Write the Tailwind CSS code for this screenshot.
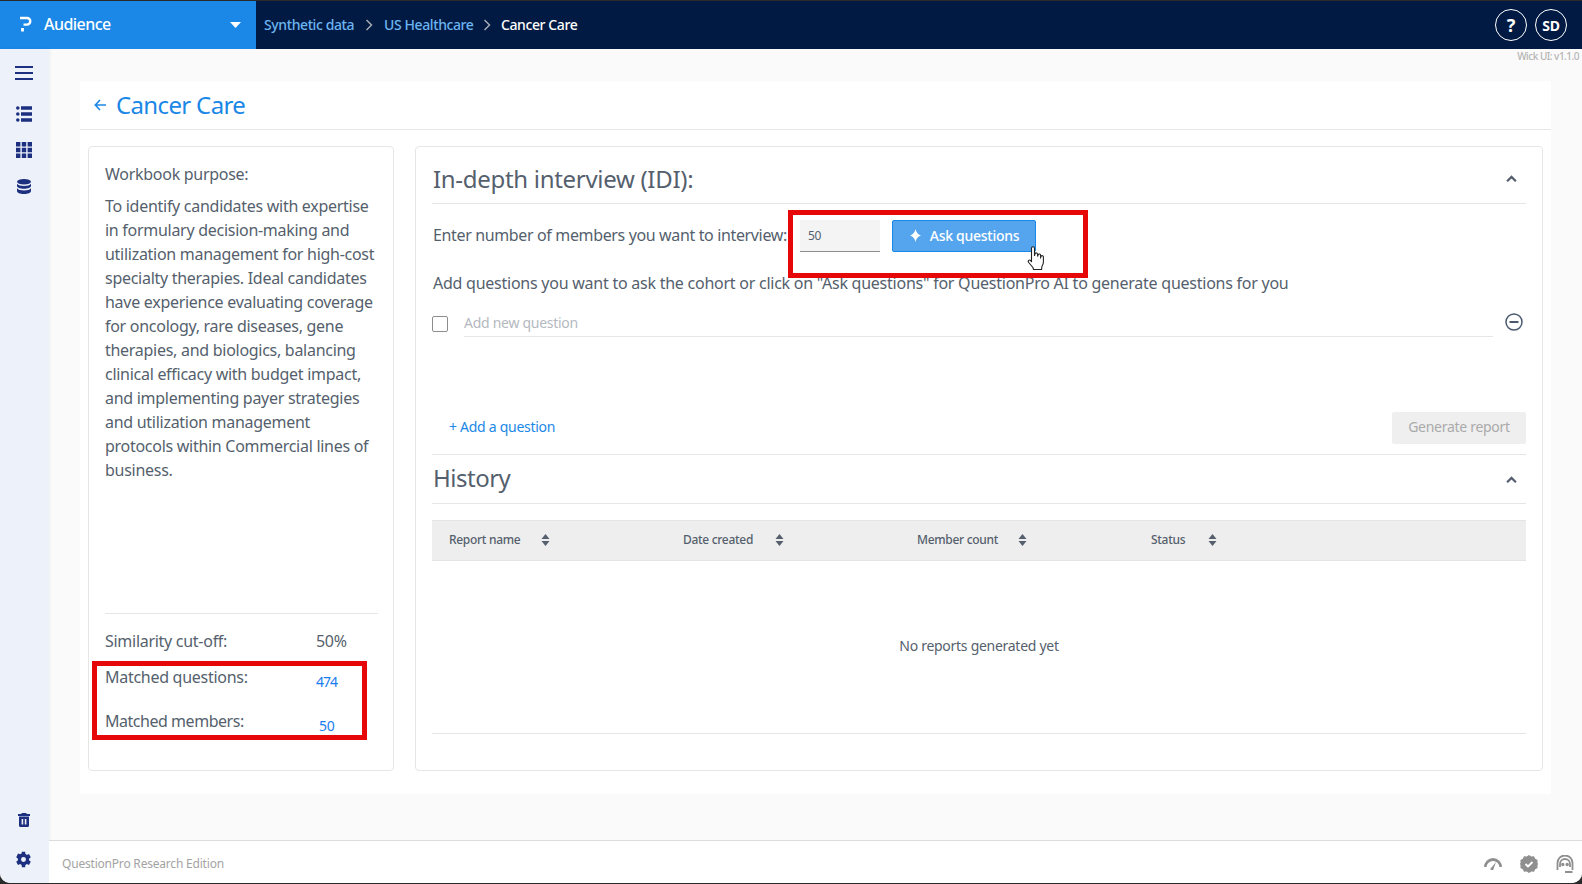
<!doctype html>
<html lang="en">
  <head>
    <meta charset="UTF-8" />
    <title>Cancer Care</title>
    <script src="https://cdn.jsdelivr.net/npm/@tailwindcss/browser@4"></script>
  </head>
  <body class="bg-[#2a2a2a] font-['Noto_Sans',sans-serif] text-[#555f6d] overflow-hidden">
    <div class="relative w-[1582px] h-[884px] pt-px pb-px">
      <div class="flex flex-col h-full bg-[#fafafa] rounded-b-[10px] overflow-hidden">

        <!-- top bar -->
        <header class="flex items-center h-12 shrink-0 bg-[#001a43] text-white">
          <div class="flex items-center w-[256px] h-full bg-[#1b87e6] pl-[20px] pr-[15px]">
            <svg class="w-[12px] h-[16px] mb-[2px]" viewBox="0 0 12 16" fill="none" stroke="#fff" stroke-width="2.4"><path d="M0 2h7a3.200 3.200 0 0 1 0 6.600H3.500"/><path d="M2.500 12v3.500" stroke-width="2.800"/></svg>
            <span class="ml-[12px] mb-[2px] text-[16px] font-medium tracking-[-0.55px]">Audience</span>
            <svg class="ml-auto w-[11px] h-[6px]" viewBox="0 0 11 6" fill="#fff"><path d="M0 0h11L5.500 6z"/></svg>
          </div>
          <nav class="flex items-center pl-2 pb-[2px] text-[14px] font-medium tracking-[-0.4px]">
            <a class="text-[#6db4f2] w-[92px]">Synthetic data</a>
            <svg class="w-[8px] h-[12px] ml-[9px] mr-[11px] mt-[2px]" viewBox="0 0 8 12" fill="none" stroke="#a5abb3" stroke-width="1.500"><path d="M1.500 1l5 5-5 5"/></svg>
            <a class="text-[#6db4f2] w-[90px]">US Healthcare</a>
            <svg class="w-[8px] h-[12px] ml-[9px] mr-[10px] mt-[2px]" viewBox="0 0 8 12" fill="none" stroke="#a5abb3" stroke-width="1.500"><path d="M1.500 1l5 5-5 5"/></svg>
            <span>Cancer Care</span>
          </nav>
          <div class="ml-auto flex items-center gap-2 pr-[15px]">
            <span class="flex items-center justify-center w-8 h-8 rounded-full border border-white text-[18px] font-bold">?</span>
            <span class="flex items-center justify-center w-8 h-8 rounded-full border border-white text-[14px] font-bold tracking-[-0.3px]">SD</span>
          </div>
        </header>

        <div class="flex flex-1 min-h-0">
          <!-- sidebar -->
          <aside class="flex flex-col items-center w-[49px] pr-[2px] shrink-0 bg-[#edf1fa] shadow-[1px_0_3px_rgba(0,0,0,0.05)] text-[#1d3080]">
            <svg class="w-[18px] h-[14px] mt-[17px]" viewBox="0 0 18 14" fill="currentColor"><path d="M0 0h18v2H0zM0 6h18v2H0zM0 12h18v2H0z"/></svg>
            <svg class="w-[16px] h-[16px] mt-[26px]" viewBox="0 0 16 16" fill="currentColor"><circle cx="1.800" cy="2" r="1.800"/><circle cx="1.800" cy="8" r="1.800"/><circle cx="1.800" cy="14" r="1.800"/><path d="M5 .2h11v3.600H5zM5 6.200h11v3.600H5zM5 12.200h11v3.600H5z"/></svg>
            <svg class="w-[16px] h-[16px] mt-[20px]" viewBox="0 0 16 16" fill="currentColor"><path d="M0 0h4.400v4.400H0zM5.800 0h4.400v4.400H5.800zM11.600 0H16v4.400h-4.400zM0 5.800h4.400v4.400H0zM5.800 5.800h4.400v4.400H5.800zM11.600 5.800H16v4.400h-4.400zM0 11.600h4.400V16H0zM5.800 11.600h4.400V16H5.800zM11.600 11.600H16V16h-4.400z"/></svg>
            <svg class="w-[14px] h-[15px] mt-[21px]" viewBox="0 0 14 15" fill="currentColor"><ellipse cx="7" cy="2.800" rx="7" ry="2.800"/><path d="M0 4.800c1 1.600 4 2.200 7 2.200s6-.6 7-2.200V7c0 1.500-3 2.800-7 2.800S0 8.500 0 7zM0 9.200c1 1.600 4 2.200 7 2.200s6-.6 7-2.200v2.800C14 13.700 11 15 7 15s-7-1.300-7-3z"/></svg>
            <svg class="w-[12px] h-[14px] mt-auto" viewBox="0 0 12 14" fill="currentColor"><path d="M4 0h4l1 1h3v2H0V1h3zM1 3.500h10v9A1.500 1.500 0 0 1 9.500 14h-7A1.500 1.500 0 0 1 1 12.500zM3.600 6v5.500h1.600V6zM6.800 6v5.500h1.600V6z"/></svg>
            <svg class="w-[17px] h-[17px] mt-[24px] mb-[15px]" viewBox="0 0 24 24" fill="currentColor"><path fill-rule="evenodd" d="M19.800 13.200a8 8 0 0 0 0-2.400l2.500-1.900-2.600-4.500-3 1.200a8 8 0 0 0-2-1.200L14.300 1.200H9.700l-.4 2.200a8 8 0 0 0-2 1.200l-3-1.200L1.700 8.900l2.500 1.900a8 8 0 0 0 0 2.400l-2.500 1.900 2.600 4.500 3-1.200a8 8 0 0 0 2 1.200l.4 3.200h4.600l.4-3.200a8 8 0 0 0 2-1.200l3 1.200 2.600-4.500zM12 15.500a3.500 3.500 0 1 1 0-7 3.500 3.500 0 0 1 0 7z"/></svg>
          </aside>

          <div class="relative flex flex-col flex-1 min-w-0">
            <span class="absolute right-[3px] top-0 text-[10px] font-medium tracking-[-0.5px] text-[#b4b4b4]">Wick UI: v1.1.0</span>

            <main class="flex-1 min-h-0 pt-8 pl-[31px] pr-[31px] pb-[46px]">
              <div class="flex flex-col h-full bg-white">
                <div class="flex items-center h-[49px] shrink-0 pl-[14px] border-b border-[#e6e6e6] text-[#1b87e6]">
                  <svg class="w-[12px] h-[12px]" viewBox="0 0 12 12" fill="none" stroke="currentColor" stroke-width="1.600"><path d="M6 1L1.300 6 6 11M1.500 6H12"/></svg>
                  <h1 class="ml-[10px] text-[24px] tracking-[-0.65px]">Cancer Care</h1>
                </div>

                <div class="flex flex-1 min-h-0 gap-[21px] px-2 pt-4 pb-[23px]">
                  <!-- workbook info -->
                  <section class="flex flex-col w-[306px] shrink-0 border border-[#e6e6e6] rounded-[4px] pt-[15px] pl-4 pr-[15px] pb-[37px] text-[16px] leading-6 tracking-[-0.28px]">
                    <p>Workbook purpose:</p>
                    <p class="mt-2">To identify candidates with expertise in formulary decision-making and utilization management for high-cost specialty therapies. Ideal candidates have experience evaluating coverage for oncology, rare diseases, gene therapies, and biologics, balancing clinical efficacy with budget impact, and implementing payer strategies and utilization management protocols within Commercial lines of business.</p>
                    <div class="mt-auto border-t border-[#e6e6e6] pt-[15px]">
                      <div class="flex h-9"><span class="w-[211px]">Similarity cut-off:</span><span>50%</span></div>
                      <div class="flex h-11"><span class="w-[211px]">Matched questions:</span><span class="mt-[5px] text-[14px] tracking-[-1px] text-[#1a7cf0]">474</span></div>
                      <div class="flex h-6"><span class="w-[214px] tracking-[-0.47px]">Matched members:</span><span class="mt-[5px] text-[14px] text-[#1a7cf0]">50</span></div>
                    </div>
                  </section>

                  <!-- interview -->
                  <section class="flex flex-col flex-1 min-w-0 border border-[#e6e6e6] rounded-[4px] pl-4 pr-4 text-[16px] tracking-[-0.28px]">
                    <div class="flex items-center justify-between h-[57px] pt-[7px] shrink-0 border-b border-[#e6e6e6] pl-px">
                      <h2 class="text-[24px] tracking-[-0.3px]">In-depth interview (IDI):</h2>
                      <svg class="w-[11px] h-[7px] mr-[9px]" viewBox="0 0 10 6" fill="none" stroke="#555f6d" stroke-width="2"><path d="M1 5.500l4-4 4 4"/></svg>
                    </div>

                    <div class="flex items-center h-8 mt-[16px] pl-px">
                      <span class="w-[367px] pb-[2px] whitespace-nowrap tracking-[-0.36px]">Enter number of members you want to interview:</span>
                      <div class="flex items-center w-20 h-8 px-2 bg-[#f4f4f4] border-b border-[#8d8d8d] text-[12px]">50</div>
                      <button class="flex items-center justify-center gap-[8px] w-[144px] h-8 ml-3 pb-[2px] rounded-[2px] bg-[#55a5ee] border border-[#1b87e6] text-white text-[14px] font-medium">
                        <svg class="w-[13px] h-[13px]" viewBox="0 0 12 12" fill="#fff"><path d="M6 0c.7 3.200 2 4.800 5 6-3 1.200-4.300 2.800-5 6-.7-3.200-2-4.800-5-6 3-1.200 4.300-2.800 5-6z"/></svg>
                        Ask questions
                      </button>
                    </div>

                    <p class="mt-[19px] leading-6 pl-px whitespace-nowrap tracking-[-0.245px]">Add questions you want to ask the cohort or click on "Ask questions" for QuestionPro AI to generate questions for you</p>

                    <div class="flex items-center mt-[12px] h-[30px]">
                      <span class="w-4 h-4 mt-[4px] rounded-[2px] border border-[#8d8d8d]"></span>
                      <div class="flex items-center flex-1 h-full pt-[2px] ml-4 border-b border-[#e6e6e6] text-[14px] text-[#b5b9bf]">Add new question</div>
                      <svg class="w-[18px] h-[18px] ml-[12px] mr-[3px]" viewBox="0 0 18 18" fill="none" stroke="#4a5a70" stroke-width="1.500"><circle cx="9" cy="9" r="8"/><path d="M4.500 9h9" stroke-width="2"/></svg>
                    </div>

                    <div class="flex items-center justify-between mt-[75px] h-8 pl-[17px] text-[14px]">
                      <a class="text-[#1b87e6] mb-[4px]">+ Add a question</a>
                      <button class="w-[134px] h-8 pb-[4px] rounded-[2px] bg-[#efefef] text-[#aaaaaa]">Generate report</button>
                    </div>

                    <div class="flex items-center justify-between h-[50px] shrink-0 mt-[10px] border-y border-[#e6e6e6] pl-px">
                      <h2 class="text-[24px] tracking-[-0.5px] pb-[2px]">History</h2>
                      <svg class="w-[11px] h-[7px] mr-[9px]" viewBox="0 0 10 6" fill="none" stroke="#555f6d" stroke-width="2"><path d="M1 5.500l4-4 4 4"/></svg>
                    </div>

                    <div class="flex items-center h-[41px] mt-[16px] pb-[2px] shrink-0 bg-[#eeeeee] border-y border-[#e4e4e4] pl-[17px] text-[12px] font-medium tracking-[-0.3px]">
                      <div class="flex items-center w-[234px]">
                        <span class="w-[92px]">Report name</span>
                        <svg class="w-[9px] h-[12px]" viewBox="0 0 9 12" fill="#555f6d"><path d="M4.500 0l4 5H.5zM4.500 12l-4-5h8z"/></svg>
                      </div>
                      <div class="flex items-center w-[234px]">
                        <span class="w-[92px]">Date created</span>
                        <svg class="w-[9px] h-[12px]" viewBox="0 0 9 12" fill="#555f6d"><path d="M4.500 0l4 5H.5zM4.500 12l-4-5h8z"/></svg>
                      </div>
                      <div class="flex items-center w-[234px]">
                        <span class="w-[101px]">Member count</span>
                        <svg class="w-[9px] h-[12px]" viewBox="0 0 9 12" fill="#555f6d"><path d="M4.500 0l4 5H.5zM4.500 12l-4-5h8z"/></svg>
                      </div>
                      <div class="flex items-center">
                        <span class="w-[57px]">Status</span>
                        <svg class="w-[9px] h-[12px]" viewBox="0 0 9 12" fill="#555f6d"><path d="M4.500 0l4 5H.5zM4.500 12l-4-5h8z"/></svg>
                      </div>
                    </div>

                    <div class="flex items-center justify-center h-[173px] pb-[4px] shrink-0 border-b border-[#e6e6e6] text-[14px]">No reports generated yet</div>
                  </section>
                </div>
              </div>
            </main>

            <footer class="flex items-center h-[43px] pt-[3px] shrink-0 border-t border-[#dcdcdc] bg-white pl-[13px] pr-2 text-[12px] tracking-[-0.2px] text-[#a3a3a3]">
              <span>QuestionPro Research Edition</span>
              <div class="ml-auto flex items-center gap-[18px]">
                <svg class="w-[18px] h-[12px]" viewBox="0 0 18 12" fill="#8f8f8f"><path d="M0 9a9 9 0 0 1 18 0h-2.500a6.500 6.500 0 0 0-6.500-6 6.500 6.500 0 0 0-6.500 6zM12 4l-2.500 7a1.500 1.500 0 1 1-2-1.500z"/></svg>
                <svg class="w-[18px] h-[18px]" viewBox="0 0 18 18"><path fill="#8f8f8f" d="M9 0l2.300 1.400 2.700-.2 1.200 2.500 2.400 1.200-.2 2.700L18 9l-.6 1.400.2 2.700-2.400 1.200-1.200 2.500-2.700-.2L9 18l-2.300-1.400-2.700.2-1.200-2.500-2.400-1.200.2-2.700L0 9l.6-1.400-.2-2.700 2.400-1.200L4 1.200l2.700.2z"/><path d="M5.500 9l2.500 2.500 4.500-4.500" fill="none" stroke="#fff" stroke-width="1.800"/></svg>
                <svg class="w-[18px] h-[18px]" viewBox="0 0 18 18" fill="none" stroke="#8f8f8f" stroke-width="1.800"><path d="M1.500 15V8a7.500 7.500 0 0 1 15 0v7"/><path d="M9 17h7.500M4 12V9a5 5 0 0 1 10 0v3"/><circle cx="6.800" cy="9.500" r=".8" fill="#8f8f8f"/><circle cx="11.200" cy="9.500" r=".8" fill="#8f8f8f"/></svg>
              </div>
            </footer>
          </div>
        </div>
      </div>

      <!-- annotation boxes and pointer -->
      <div class="absolute left-[788px] top-[210px] w-[300px] h-[68px] border-[5px] border-[#e60808]"></div>
      <div class="absolute left-[92px] top-[661px] w-[275px] h-[79px] border-[5px] border-[#e60808]"></div>
      <svg class="absolute left-[1027px] top-[246px] w-[19px] h-[25px]" viewBox="0 0 19 25" fill="#fff" stroke="#222" stroke-width="1.100"><path d="M4.500 16V2.200a1.500 1.500 0 0 1 3 0V10l.4-2.200a1.400 1.400 0 0 1 2.700.4V10.500l.5-1.700a1.300 1.300 0 0 1 2.500.5v2l.5-.9a1.200 1.200 0 0 1 2.300.5v5.100c0 2-.5 3-1.500 4.500l-.3 3H6.500l-.6-2L1.700 16.500c-1.300-1.500.6-3.300 2-2z"/></svg>
    </div>
  </body>
</html>
